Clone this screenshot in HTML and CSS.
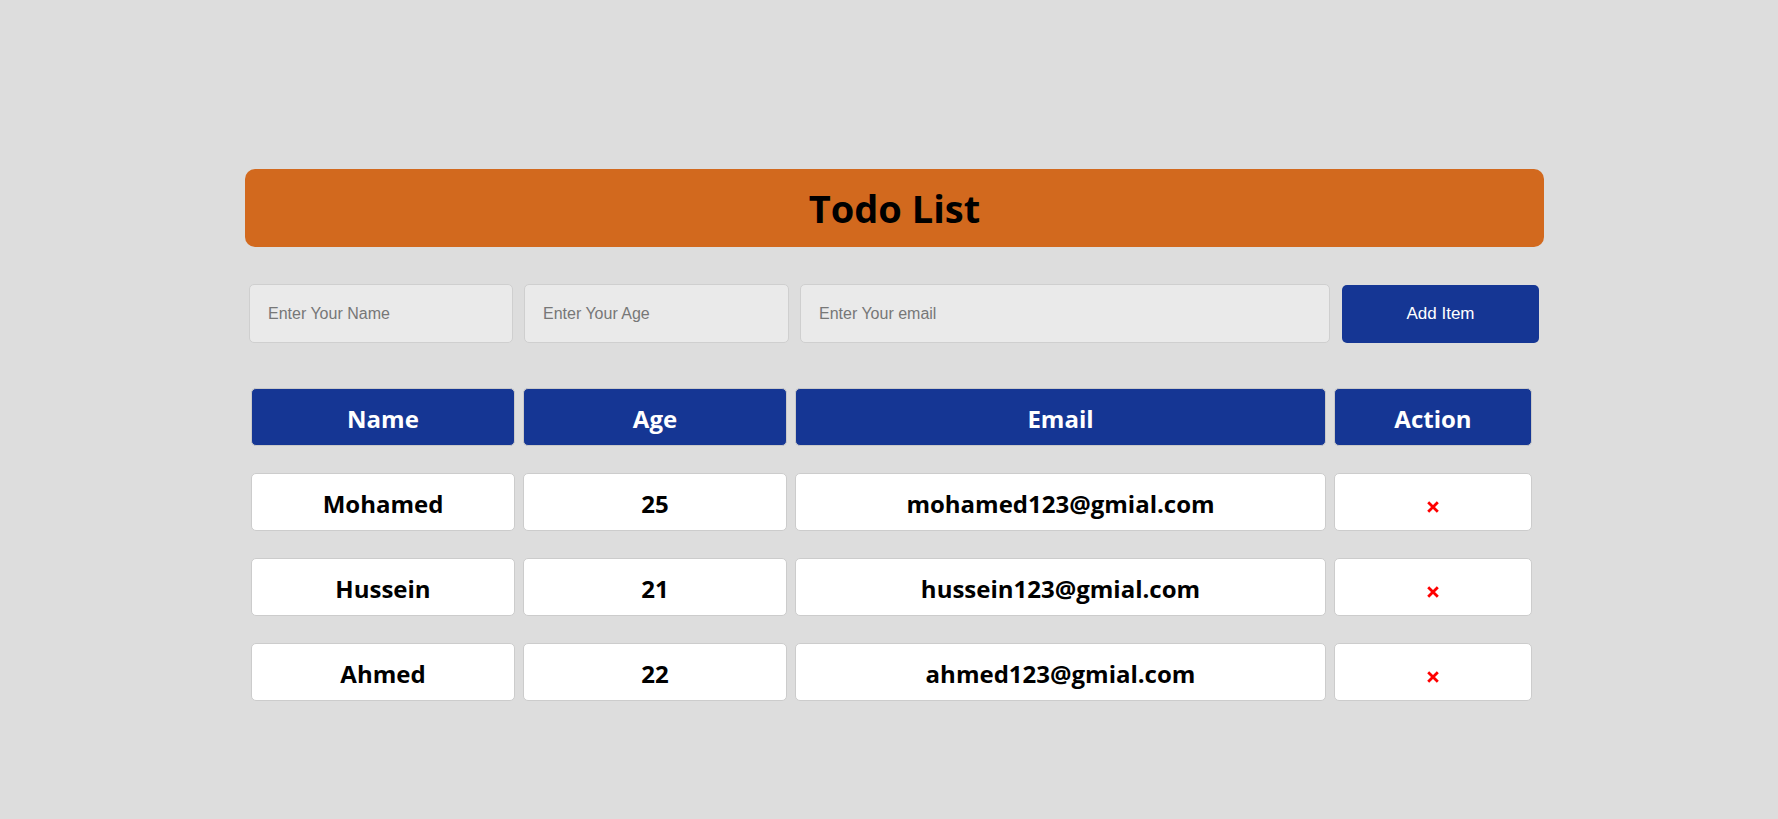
FILE: index.html
```html
<!DOCTYPE html>
<html lang="en">
<head>
<meta charset="utf-8">
<title>Todo List</title>
<link rel="stylesheet" href="styles.css">
</head>
<body>
<main class="app">
  <h1 class="title">Todo List</h1>
  <form class="add-form">
    <input class="field" type="text" placeholder="Enter Your Name">
    <input class="field" type="text" placeholder="Enter Your Age">
    <input class="field" type="text" placeholder="Enter Your email">
    <button class="add-btn" type="button">Add Item</button>
  </form>
  <table class="list">
    <thead>
      <tr>
        <th class="c-name">Name</th>
        <th class="c-age">Age</th>
        <th class="c-email">Email</th>
        <th class="c-action">Action</th>
      </tr>
    </thead>
    <tbody>
      <tr>
        <td>Mohamed</td>
        <td>25</td>
        <td>mohamed123@gmial.com</td>
        <td><span class="del"><svg viewBox="0 0 12 12" width="12" height="12"><path d="M1.2 1.2L10.8 10.8M10.8 1.2L1.2 10.8" stroke="#ff0000" stroke-width="2.8" fill="none"/></svg></span></td>
      </tr>
      <tr>
        <td>Hussein</td>
        <td>21</td>
        <td>hussein123@gmial.com</td>
        <td><span class="del"><svg viewBox="0 0 12 12" width="12" height="12"><path d="M1.2 1.2L10.8 10.8M10.8 1.2L1.2 10.8" stroke="#ff0000" stroke-width="2.8" fill="none"/></svg></span></td>
      </tr>
      <tr>
        <td>Ahmed</td>
        <td>22</td>
        <td>ahmed123@gmial.com</td>
        <td><span class="del"><svg viewBox="0 0 12 12" width="12" height="12"><path d="M1.2 1.2L10.8 10.8M10.8 1.2L1.2 10.8" stroke="#ff0000" stroke-width="2.8" fill="none"/></svg></span></td>
      </tr>
    </tbody>
  </table>
</main>
</body>
</html>
```
FILE: styles.css
```css
html, body {
  margin: 0;
  background: #dddddd;
}
body {
  padding: 0 0 0 11px;
  font-family: "Open Sans", "Liberation Sans", sans-serif;
}
.app {
  width: 1299px;
  margin: 169px auto 0;
}
.title {
  margin: 0;
  height: 78px;
  background: #d2691e;
  border-radius: 10px;
  color: #000;
  font-size: 38px;
  font-weight: 700;
  line-height: 78px;
  text-align: center;
}
.add-form {
  display: grid;
  grid-template-columns: 264px 265px 530px 197px;
  column-gap: 11px;
  margin: 37px 0 0 4px;
}
.field {
  box-sizing: border-box;
  width: 100%;
  height: 59px;
  margin: 0;
  padding: 0 18px;
  background: #eaeaea;
  border: 1px solid #cfcfcf;
  border-radius: 5px;
  font-family: "Liberation Sans", Arial, sans-serif;
  font-size: 16px;
  color: #333;
  outline: none;
}
.field::placeholder {
  color: #777;
}
.add-btn {
  width: 197px;
  height: 58px;
  margin: 1px 0 0 1px;
  background: #153694;
  border: none;
  border-radius: 5px;
  color: #fff;
  font-family: "Liberation Sans", Arial, sans-serif;
  font-size: 17px;
  cursor: pointer;
}
.list {
  border-collapse: separate;
  border-spacing: 8px 27px;
  margin: 18px 0 0 -2px;
  table-layout: fixed;
}
.list th, .list td {
  box-sizing: border-box;
  height: 58px;
  padding: 3px 0 0;
  line-height: 53px;
  border-radius: 5px;
  text-align: center;
  font-size: 24px;
  font-weight: 700;
}
.list th {
  background: #153694;
  color: #fff;
  border: 1px solid #c9c9c9;
}
.list td {
  background: #fff;
  color: #000;
  border: 1px solid #cccccc;
}
.c-name { width: 264px; }
.c-age { width: 264px; }
.c-email { width: 531px; }
.c-action { width: 198px; }
.del {
  display: inline-block;
  line-height: 0;
  position: relative;
  top: 0;
  cursor: pointer;
}
```
